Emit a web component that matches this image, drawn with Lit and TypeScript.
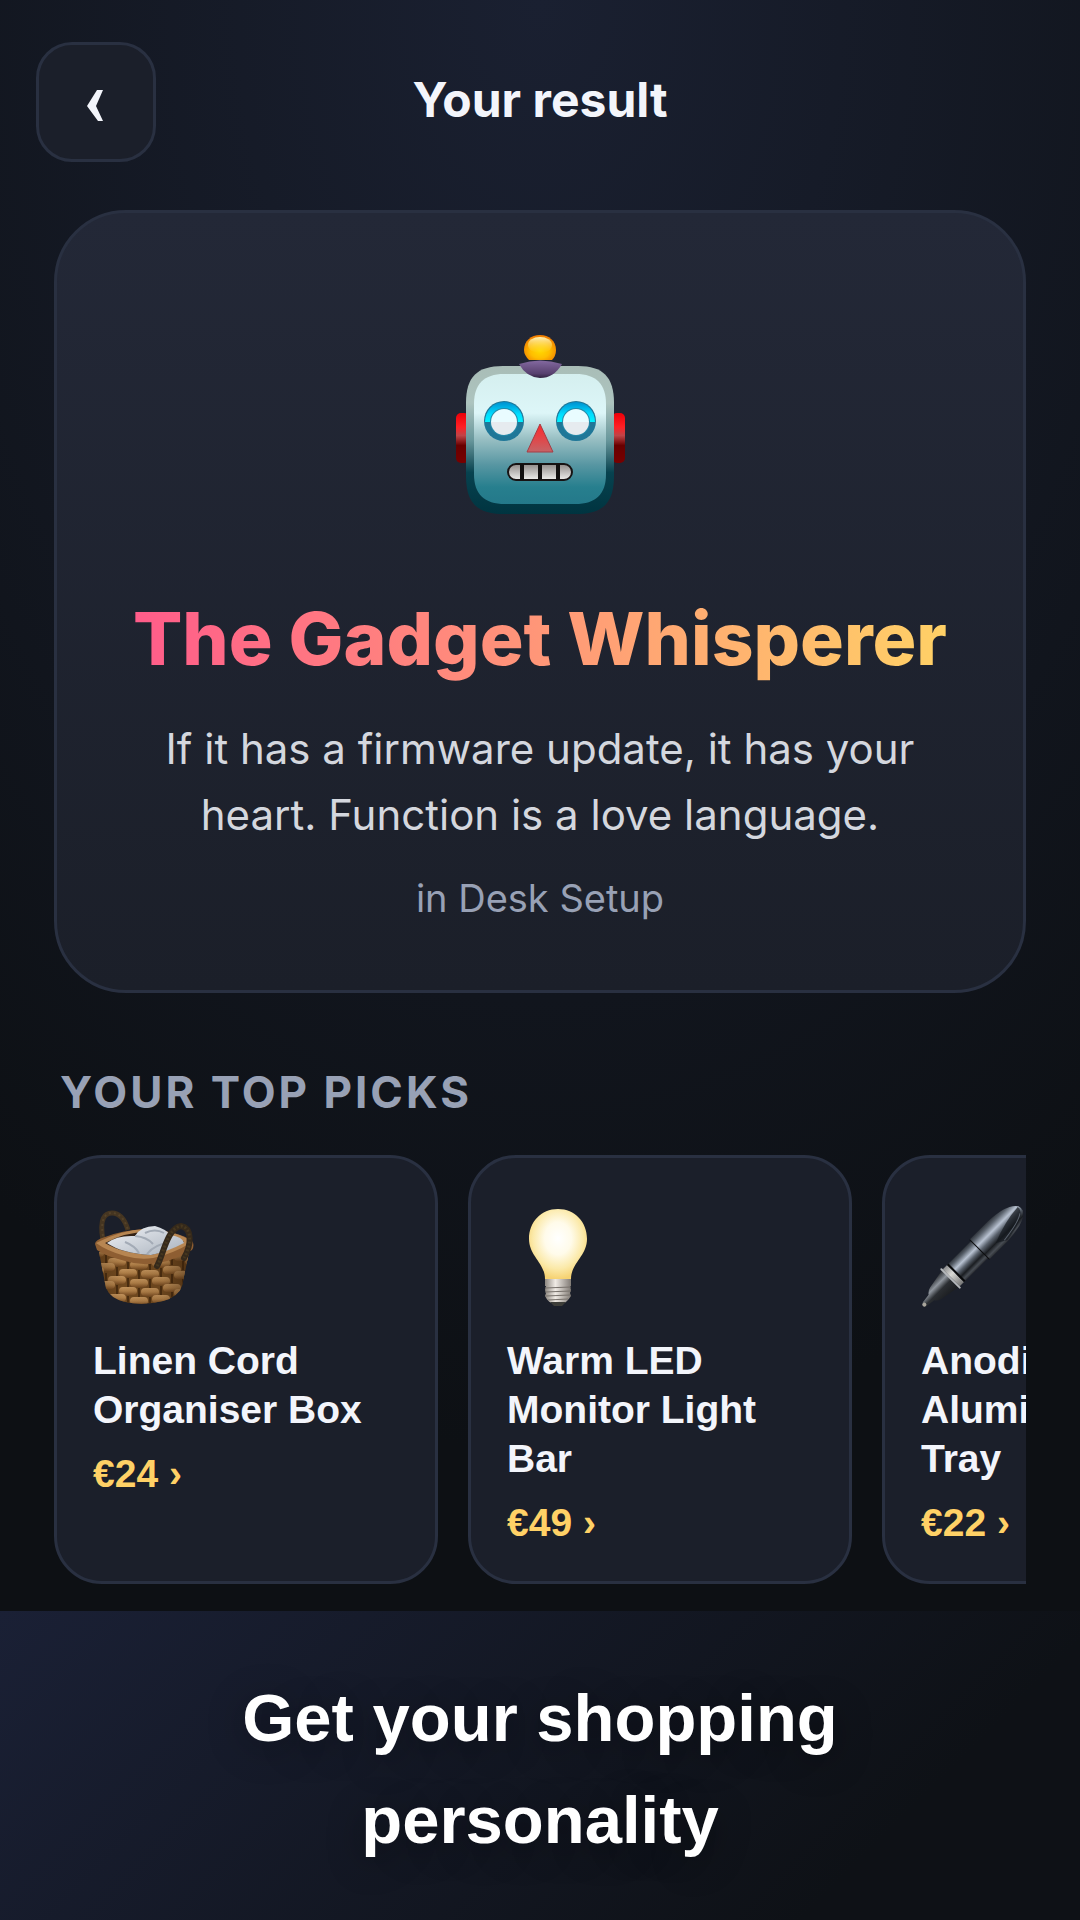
import { LitElement, html, svg, css } from 'lit';
import { customElement, property, state } from 'lit/decorators.js';

interface Pick {
  icon: string;
  name: string;
  price: string;
}

const basketIcon = () => {
  // woven strips, row by row; each row sags towards the middle
  const rows = [
    { y: 45, off: 0 },
    { y: 54, off: 11 },
    { y: 63, off: 0 },
    { y: 72, off: 11 },
    { y: 81, off: 0 },
    { y: 90, off: 11 },
  ];
  const sag = (x: number) => Math.round(8 - (x - 50) * (x - 50) / 200);
  return svg`
    <defs>
      <linearGradient id="weave" x1="0" y1="0" x2="0" y2="1">
        <stop offset="0" stop-color="#c2935c"/><stop offset="0.5" stop-color="#ae7e47"/><stop offset="1" stop-color="#7a4e24"/>
      </linearGradient>
      <linearGradient id="cloth" x1="0" y1="0" x2="1" y2="1">
        <stop offset="0" stop-color="#f0f2f6"/><stop offset="1" stop-color="#a9b2bd"/>
      </linearGradient>
      <linearGradient id="side" x1="0" y1="0" x2="1" y2="0">
        <stop offset="0" stop-color="#2a1606" stop-opacity="0.3"/>
        <stop offset="0.3" stop-color="#2a1606" stop-opacity="0"/>
        <stop offset="0.7" stop-color="#2a1606" stop-opacity="0.1"/>
        <stop offset="1" stop-color="#2a1606" stop-opacity="0.5"/>
      </linearGradient>
      <clipPath id="body"><path d="M6 44 L13 80 Q17 90 32 94 Q50 98 70 93 Q85 89 89 78 L96 44 Z"/></clipPath>
    </defs>
    <path d="M10 32 C6 10 12 5 19 5 C27 5 32 12 35 22" fill="none" stroke="#453521" stroke-width="5"/>
    <path d="M10 28 C7 10 13 5 19 5 C27 5 32 12 35 22" fill="none" stroke="#55432a" stroke-width="2" stroke-dasharray="2 3"/>
    <g clip-path="url(#body)">
      <rect x="0" y="40" width="100" height="60" fill="#70491f"/>
      ${rows.map(r => [0, 1, 2, 3, 4].map(i => {
        const x = r.off + i * 22 - 7;
        return svg`
          <rect x=${x - 3} y=${r.y + sag(x)} width="2" height="9" fill="#4a2d10"/>
          <rect x=${x} y=${r.y + sag(x + 9)} width="18" height="8" rx="4" fill="url(#weave)"/>`;
      }))}
      <rect x="0" y="40" width="100" height="60" fill="url(#side)"/>
    </g>
    <path d="M2 36 Q2 32 12 29 Q30 22 52 21 Q86 23 99 33 Q102 37 99 42 Q82 52 66 55 Q48 58 32 53 Q12 48 4 42 Z" fill="#8e5e32"/>
    <path d="M3 35 Q28 22 52 21 Q86 23 99 34 Q80 46 60 50 Q46 52 32 48 Q14 43 3 35 Z" fill="#b78652"/>
    <path d="M12 35 Q32 24 54 24 Q80 26 91 34 Q72 44 58 47 Q28 45 12 35 Z" fill="#332216"/>
    <path d="M14 35 Q24 27 42 28 Q48 18 62 18 Q73 21 77 27 Q90 29 91 35 Q74 44 58 47 Q28 45 14 35 Z" fill="url(#cloth)"/>
    <path d="M42 28 Q54 29 60 36 M32 34 Q42 38 46 45 M54 46 Q62 36 76 35 M52 25 Q62 20 71 25" fill="none" stroke="#a3abb6" stroke-width="2"/>
    <path d="M64 58 C70 48 74 20 88 18 C99 20 99 36 91 50" fill="none" stroke="#35291b" stroke-width="6" stroke-linecap="round"/>
    <path d="M64 58 C70 48 74 20 88 18 C99 20 99 36 91 50" fill="none" stroke="#46371f" stroke-width="3" stroke-dasharray="2 2"/>
  `;
};

const bulbIcon = () => svg`
  <defs>
    <radialGradient id="glow" cx="0.5" cy="0.42" r="0.58">
      <stop offset="0" stop-color="#ffffff"/><stop offset="0.4" stop-color="#fffbea"/>
      <stop offset="0.75" stop-color="#fbe9a8"/><stop offset="1" stop-color="#f6d272"/>
    </radialGradient>
    <linearGradient id="screw" x1="0" y1="0" x2="1" y2="0">
      <stop offset="0" stop-color="#8e8881"/><stop offset="0.4" stop-color="#f0ebe5"/><stop offset="1" stop-color="#817b75"/>
    </linearGradient>
  </defs>
  <path d="M51 1 C68 1 80 14 80 31 C80 48 64 55 64 71 L38 71 C38 55 22 48 22 31 C22 14 34 1 51 1 Z" fill="url(#glow)"/>
  <path d="M38 71 H64 V78 H38 Z" fill="url(#screw)"/>
  <path d="M39 78 H63 L64 82 L63 85 L64 88 Q60 94 57 95 H45 Q41 94 38 88 L39 85 L38 82 Z" fill="url(#screw)"/>
  <path d="M38 80 L64 79 M38 84 L64 83 M39 88 L63 87 M41 92 L61 91" stroke="#77716b" stroke-width="1"/>
  <path d="M43 94 H59 L55 98 H47 Z" fill="#3d3d38"/>
`;

const penIcon = () => svg`
  <defs>
    <linearGradient id="steel" x1="0" y1="0" x2="0" y2="1">
      <stop offset="0" stop-color="#30353c"/><stop offset="0.14" stop-color="#59616b"/>
      <stop offset="0.36" stop-color="#b9c3d2"/><stop offset="0.55" stop-color="#59616c"/>
      <stop offset="0.75" stop-color="#1a1d21"/><stop offset="0.9" stop-color="#484d54"/>
      <stop offset="1" stop-color="#2c2f34"/>
    </linearGradient>
    <linearGradient id="tip" x1="0" y1="0" x2="0" y2="1">
      <stop offset="0" stop-color="#25282c"/><stop offset="0.3" stop-color="#8f959d"/>
      <stop offset="0.55" stop-color="#2b2e32"/><stop offset="1" stop-color="#1a1c1f"/>
    </linearGradient>
    <linearGradient id="ring" x1="0" y1="0" x2="0" y2="1">
      <stop offset="0" stop-color="#8b8c8d"/><stop offset="0.4" stop-color="#d9d9d5"/><stop offset="1" stop-color="#777777"/>
    </linearGradient>
  </defs>
  <g transform="translate(2 98) rotate(-45)">
    <path d="M0 -1 Q1 -3 5 -3 L12 -4 Q14 -7 18 -8 L40 -12 V12 L18 8 Q14 7 12 4 L5 3 Q1 3 0 1 Z" fill="url(#tip)"/>
    <circle cx="2" cy="0" r="2" fill="#aaa69c"/>
    <rect x="40" y="-12" width="6" height="24" fill="url(#ring)"/>
    <rect x="38" y="-14" width="2" height="28" rx="1" fill="#b5b8bb"/>
    <rect x="46" y="-12" width="35" height="24" fill="url(#steel)"/>
    <rect x="46" y="-12" width="2" height="24" fill="#08090a"/>
    <path d="M80 -14 H106 Q132 -13 138 -3 Q139 0 138 3 Q132 13 106 14 H80 Z" fill="url(#steel)"/>
    <path d="M80 -14 V14" stroke="#0b0c0e" stroke-width="1"/>
    <path d="M96 7 Q118 -2 137 -3 Q138 9 106 13 Z" fill="#14181e" opacity="0.7"/>
    <path d="M104 11 Q128 8 134 3" fill="none" stroke="#5a626d" stroke-width="1"/>
  </g>
`;

const icons: Record<string, () => unknown> = {
  basket: basketIcon,
  bulb: bulbIcon,
  pen: penIcon,
};

@customElement('robot-face')
export class RobotFace extends LitElement {
  static styles = css`
    :host {
      display: block;
    }
    svg {
      display: block;
      width: 100%;
    }
  `;

  // eyes share the same drawing, only cx differs
  eye(cx: number) {
    return svg`
      <circle cx=${cx} cy="111" r="20" fill="#1f7798"/>
      <path d="M${cx - 19} 112 A19 20 0 0 1 ${cx + 19} 112 Z" fill="url(#eye)"/>
      <circle cx=${cx} cy="112" r="14" fill="#2589a8"/>
      <path d="M${cx - 13} 112 A13 13 0 0 1 ${cx + 13} 112 Z" fill="#e9fcff"/>
      <path d="M${cx - 13} 112 A13 13 0 0 0 ${cx + 13} 112 Z" fill="#e6ebef"/>`;
  }

  render() {
    return html`
      <svg viewBox="0 0 220 220" role="img" aria-label="Robot">
        <defs>
          <linearGradient id="shell" x1="0" y1="0" x2="0" y2="1">
            <stop offset="0" stop-color="#a9bdb7"/><stop offset="0.25" stop-color="#adc4bf"/>
            <stop offset="0.5" stop-color="#68979c"/><stop offset="0.72" stop-color="#07424f"/>
            <stop offset="1" stop-color="#003440"/>
          </linearGradient>
          <linearGradient id="face" x1="0" y1="0" x2="0" y2="1">
            <stop offset="0" stop-color="#d5efef"/><stop offset="0.3" stop-color="#ddf6f8"/>
            <stop offset="0.5" stop-color="#98bfc3"/><stop offset="0.7" stop-color="#5796a2"/>
            <stop offset="0.87" stop-color="#277f8e"/><stop offset="1" stop-color="#24798a"/>
          </linearGradient>
          <linearGradient id="ear" x1="0" y1="0" x2="0" y2="1">
            <stop offset="0" stop-color="#ed0008"/><stop offset="0.28" stop-color="#ff2025"/>
            <stop offset="0.45" stop-color="#c04447"/><stop offset="0.65" stop-color="#680000"/>
            <stop offset="1" stop-color="#780000"/>
          </linearGradient>
          <radialGradient id="ball" cx="0.5" cy="0.63" r="0.6">
            <stop offset="0" stop-color="#ffd900"/><stop offset="0.5" stop-color="#ffbe00"/>
            <stop offset="1" stop-color="#f07c00"/>
          </radialGradient>
          <linearGradient id="shine" x1="0" y1="0" x2="0" y2="1">
            <stop offset="0" stop-color="#fff3b8"/><stop offset="1" stop-color="#ffe047" stop-opacity="0"/>
          </linearGradient>
          <linearGradient id="cap" x1="0" y1="0" x2="0" y2="1">
            <stop offset="0" stop-color="#8369a0"/><stop offset="0.75" stop-color="#57406e"/><stop offset="1" stop-color="#302240"/>
          </linearGradient>
          <linearGradient id="eye" x1="0" y1="0" x2="0" y2="1">
            <stop offset="0" stop-color="#0090d0"/><stop offset="0.6" stop-color="#00dcff"/><stop offset="1" stop-color="#00f4ff"/>
          </linearGradient>
          <linearGradient id="nose" x1="0" y1="0" x2="0" y2="1">
            <stop offset="0" stop-color="#ff2628"/><stop offset="1" stop-color="#c56467"/>
          </linearGradient>
          <linearGradient id="teeth" x1="0" y1="0" x2="0" y2="1">
            <stop offset="0" stop-color="#8f8a88"/><stop offset="1" stop-color="#efefed"/>
          </linearGradient>
        </defs>
        <rect x="26" y="103" width="13" height="50" rx="5" fill="url(#ear)"/>
        <rect x="182" y="103" width="13" height="50" rx="5" fill="url(#ear)"/>
        <path d="M36 93 C36 67 47 56 73 56 H148 C173 56 184 67 184 93 V166 C184 193 173 204 146 204 H74 C47 204 36 193 36 166 Z" fill="url(#shell)"/>
        <path d="M44 94 C44 74 54 64 74 64 H146 C166 64 176 74 176 94 V164 C176 184 166 194 145 194 H75 C54 194 44 184 44 164 Z" fill="url(#face)"/>
        <path d="M89 54 Q110 47 132 54 Q124 68 110 68 Q96 67 89 54 Z" fill="url(#cap)"/>
        <path d="M99 50 Q94 45 94 40 C94 31 101 25 110 25 C119 25 126 31 126 40 Q126 46 122 50 Z" fill="url(#ball)"/>
        <ellipse cx="110" cy="35" rx="12" ry="8" fill="url(#shine)"/>
        ${this.eye(74)} ${this.eye(146)}
        <path d="M110 114 L123 142 H97 Z" fill="url(#nose)" stroke="#a53c44" stroke-width="1" stroke-linejoin="round"/>
        <rect x="78" y="154" width="64" height="16" rx="8" fill="url(#teeth)" stroke="#171313" stroke-width="2"/>
        <path d="M92 154 V170 M110 154 V170 M128 154 V170" stroke="#110f0f" stroke-width="4"/>
      </svg>
    `;
  }
}

@customElement('pick-card')
export class PickCard extends LitElement {
  @property({ attribute: false }) pick!: Pick;

  static styles = css`
    :host {
      display: flex;
      flex: 0 0 384px;
    }
    .card {
      display: flex;
      flex-direction: column;
      flex: 1;
      min-width: 0;
      box-sizing: border-box;
      padding: 50px 36px 34px;
      border: 3px solid #293041;
      border-radius: 48px;
      background: #1b1f2a;
      color: #f3f5fb;
      font: bold 39px/49px 'Liberation Sans', Arial, sans-serif;
      text-decoration: none;
    }
    .icon {
      display: block;
      width: 100px;
      height: 100px;
      margin-bottom: 28px;
      overflow: visible;
    }
    .price {
      margin-top: 15px;
      color: #ffd166;
    }
  `;

  render() {
    return html`
      <a class="card" href="#">
        <svg class="icon" viewBox="0 0 100 100" aria-hidden="true">${icons[this.pick.icon]()}</svg>
        <span>${this.pick.name}</span>
        <span class="price">${this.pick.price} ›</span>
      </a>
    `;
  }
}

@customElement('app-root')
export class AppRoot extends LitElement {
  @state() picks: Pick[] = [
    { icon: 'basket', name: 'Linen Cord Organiser Box', price: '€24' },
    { icon: 'bulb', name: 'Warm LED Monitor Light Bar', price: '€49' },
    { icon: 'pen', name: 'Anodised Aluminium Pen Tray', price: '€22' },
  ];

  static styles = css`
    :host {
      display: flex;
      flex-direction: column;
      min-height: 100vh;
      background: #0e1116;
      color: #f3f5fb;
      font-family: Inter, 'Liberation Sans', sans-serif;
    }
    .screen {
      padding: 42px 0 27px;
      background: radial-gradient(120% 120% at 50% 0, #1a2031 0%, #0d1014 75%);
    }
    header {
      display: grid;
      grid-template-columns: 120px 1fr 120px;
      align-items: center;
      padding: 0 36px;
    }
    .back {
      display: grid;
      place-items: center;
      height: 120px;
      padding: 8px 0 0;
      border: 3px solid #293041;
      border-radius: 36px;
      background: #1b1f2a;
      color: #f3f5fb;
    }
    .back svg {
      width: 18px;
      height: 32px;
    }
    h1 {
      margin: 0 0 4px;
      font-size: 48px;
      line-height: 60px;
      font-weight: 700;
      text-align: center;
    }
    main {
      padding: 48px 54px 0;
    }
    .result {
      display: flex;
      flex-direction: column;
      align-items: center;
      padding: 97px 72px 68px;
      border: 3px solid #293041;
      border-radius: 72px;
      background: linear-gradient(180deg, #232837, #1b1f29);
      text-align: center;
    }
    .face {
      width: 220px;
    }
    .result h2 {
      margin: 64px 0 0;
      background: linear-gradient(90deg, #ff5c8a, #ffd166);
      background-clip: text;
      -webkit-background-clip: text;
      color: transparent;
      font-size: 73px;
      line-height: 90px;
      font-weight: 800;
    }
    .result p {
      margin: 32px 0 0;
      color: #d4d7de;
      font-size: 42px;
      line-height: 66px;
    }
    .result .category {
      margin-top: 26px;
      color: #98a1b5;
      font-size: 38px;
      line-height: 48px;
    }
    h3 {
      margin: 72px 6px 36px;
      color: #98a1b5;
      font-size: 44px;
      line-height: 54px;
      font-weight: 700;
      letter-spacing: 3px;
      text-transform: uppercase;
    }
    .picks {
      display: flex;
      gap: 30px;
      overflow-x: auto;
      scrollbar-width: none;
    }
    .banner {
      display: flex;
      flex: 1;
      align-items: center;
      justify-content: center;
      padding: 55px 60px 48px;
      background: linear-gradient(135deg, #1a2035 0%, #0e1116 80%);
      color: #ffffff;
      font: bold 67px/102px 'Liberation Sans', Arial, sans-serif;
      text-align: center;
      text-shadow: 0 6px 36px rgba(0, 0, 0, 0.4);
    }
    .banner p {
      margin: 0;
      max-width: 900px;
    }
  `;

  render() {
    return html`
      <div class="screen">
        <header>
          <button class="back" aria-label="Back">
            <svg viewBox="0 0 18 32" aria-hidden="true">
              <path d="M10 0 H16 L9 16 L16 31 H11 L0 16 Z" fill="currentColor"></path>
            </svg>
          </button>
          <h1>Your result</h1>
        </header>
        <main>
          <section class="result">
            <robot-face class="face"></robot-face>
            <h2>The Gadget Whisperer</h2>
            <p>If it has a firmware update, it has your heart. Function is a love language.</p>
            <p class="category">in Desk Setup</p>
          </section>
          <h3>Your top picks</h3>
          <div class="picks">
            ${this.picks.map(p => html`<pick-card .pick=${p}></pick-card>`)}
          </div>
        </main>
      </div>
      <footer class="banner"><p>Get your shopping personality</p></footer>
    `;
  }
}
